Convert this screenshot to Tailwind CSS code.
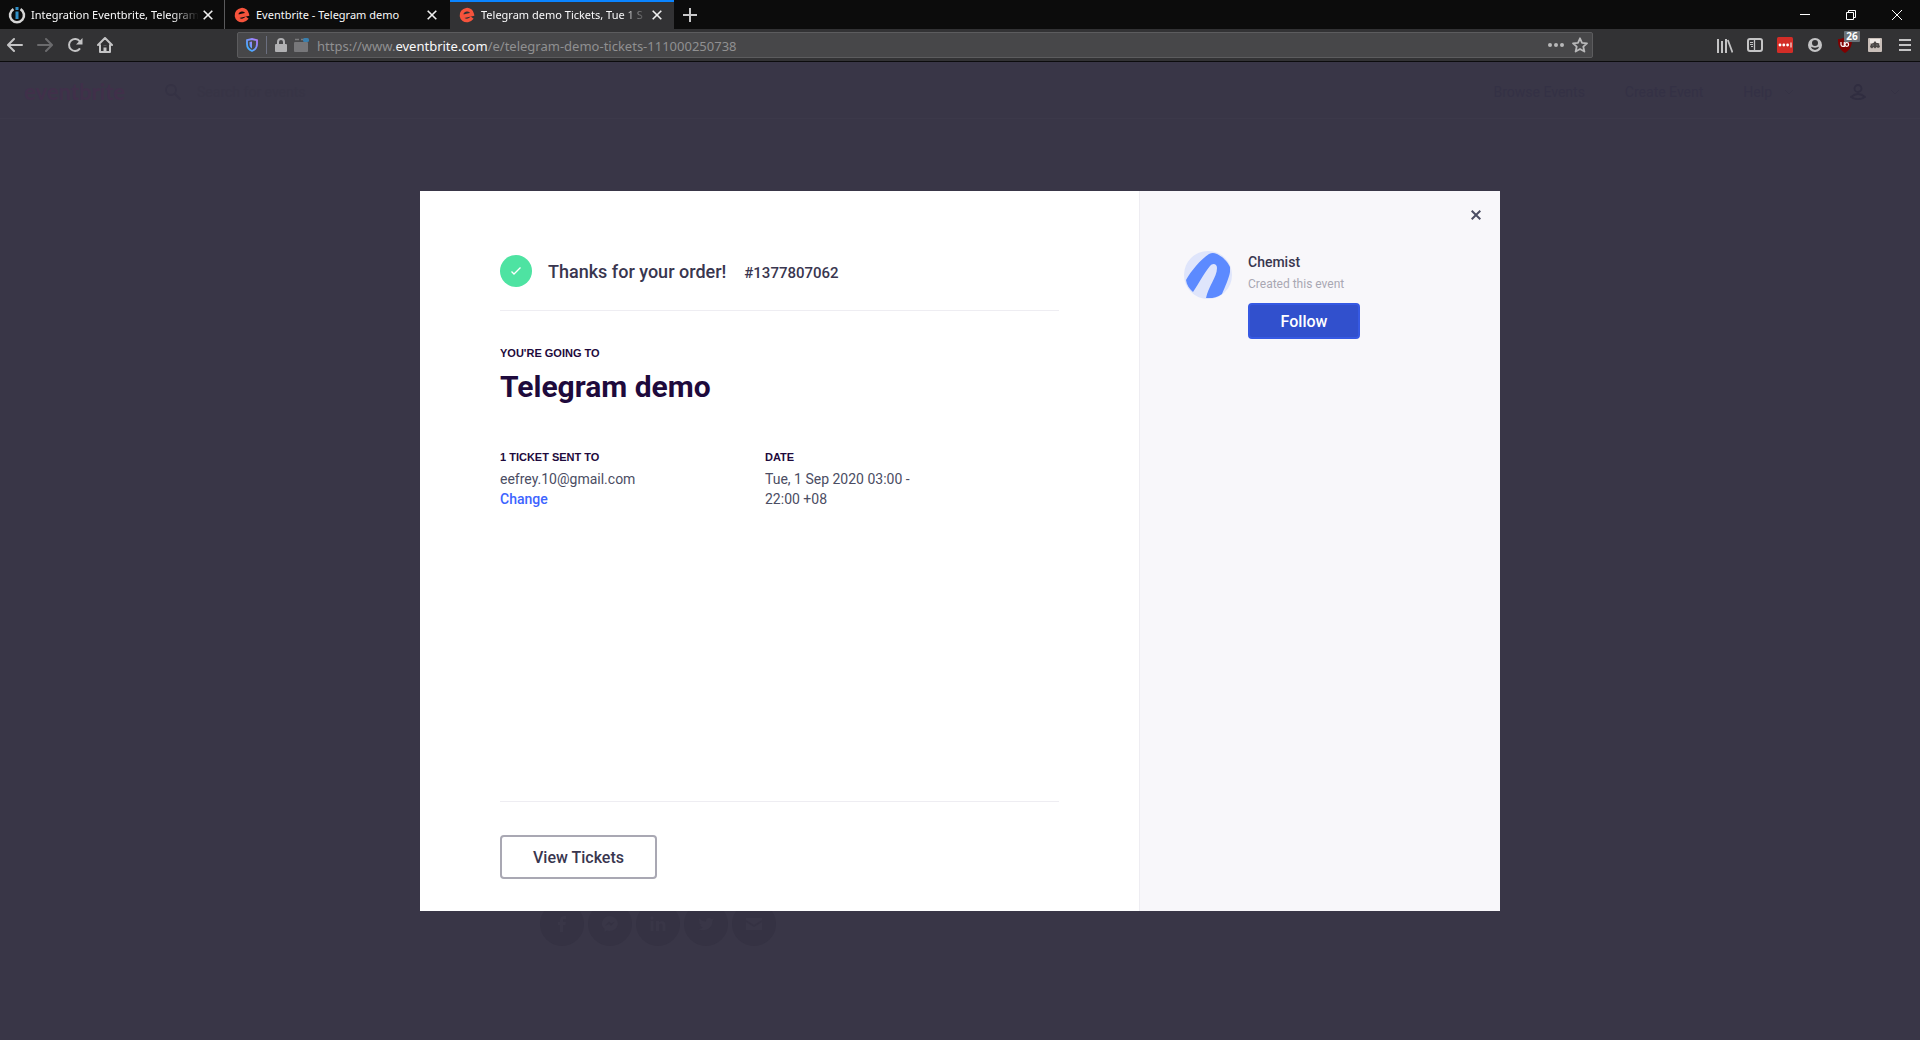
<!DOCTYPE html>
<html lang="en">
<head>
<meta charset="utf-8">
<title>Telegram demo Tickets</title>
<script src="https://cdn.jsdelivr.net/npm/@tailwindcss/browser@4"></script>
</head>
<body class="flex min-h-screen flex-col bg-[#393647] font-['Roboto',sans-serif]">

<!-- Browser chrome -->
<div class="border-b border-[#0c0c0d] bg-[#323234] font-['Noto_Sans','Open_Sans',sans-serif]">
  <div class="flex h-[29px] bg-[#0c0c0c] text-[11px] text-[#f9f9fa]">
    <div class="flex w-[225px] items-center border-r border-[#5a5a5c] pr-[7px] pl-2">
      <svg class="h-[18px] w-[18px] shrink-0" viewBox="0 0 18 18" fill="none"><path d="M5.5 3.2A7 7 0 1 0 12.500 3.200" stroke="#d6d6d6" stroke-width="2.600"/><path d="M9 5.500V13" stroke="#2f8fc7" stroke-width="3"/><path d="M9 1V4" stroke="#2f8fc7" stroke-width="3"/></svg>
      <span class="ml-[5px] flex-1 overflow-hidden pt-[2px] whitespace-nowrap [mask-image:linear-gradient(to_right,black_84%,transparent)]">Integration Eventbrite, Telegram</span>
      <button class="p-1" aria-label="Close tab"><svg class="h-[10px] w-[10px]" viewBox="0 0 10 10" stroke="#f0f0f0" stroke-width="1.600"><path d="M.7 .7L9.300 9.300M9.300 .7L.7 9.300"/></svg></button>
    </div>
    <div class="flex w-[225px] items-center pr-[9px] pl-[9px]">
      <svg class="h-4 w-4 shrink-0" viewBox="0 0 16 16" fill="none"><path d="M2.600 9.700L13.300 7.300C12.800 4.400 10.300 2.300 7.400 2.700C4.200 3.100 2 5.700 2.500 9C2.900 12 5.600 13.900 8.700 13.400C10.800 13 12.200 12 13.200 10.700" stroke="#f6533c" stroke-width="3.600"/></svg>
      <span class="ml-[6px] flex-1 overflow-hidden pt-[2px] whitespace-nowrap">Eventbrite - Telegram demo</span>
      <button class="p-1" aria-label="Close tab"><svg class="h-[10px] w-[10px]" viewBox="0 0 10 10" stroke="#f0f0f0" stroke-width="1.600"><path d="M.7 .7L9.300 9.300M9.300 .7L.7 9.300"/></svg></button>
    </div>
    <div class="flex w-[224px] items-center bg-[#323234] pr-[8px] pl-[9px] shadow-[inset_0_2px_0_#0a84ff]">
      <svg class="h-4 w-4 shrink-0" viewBox="0 0 16 16" fill="none"><path d="M2.600 9.700L13.300 7.300C12.800 4.400 10.300 2.300 7.400 2.700C4.200 3.100 2 5.700 2.500 9C2.900 12 5.600 13.900 8.700 13.400C10.800 13 12.200 12 13.200 10.700" stroke="#f6533c" stroke-width="3.600"/></svg>
      <span class="ml-[6px] flex-1 overflow-hidden pt-[2px] whitespace-nowrap [mask-image:linear-gradient(to_right,black_84%,transparent)]">Telegram demo Tickets, Tue 1 S</span>
      <button class="p-1" aria-label="Close tab"><svg class="h-[10px] w-[10px]" viewBox="0 0 10 10" stroke="#f0f0f0" stroke-width="1.600"><path d="M.7 .7L9.300 9.300M9.300 .7L.7 9.300"/></svg></button>
    </div>
    <button class="px-[9px]" aria-label="New tab"><svg class="h-[14px] w-[14px]" viewBox="0 0 14 14" stroke="#c8c8c9" stroke-width="2"><path d="M7 0V14M0 7H14"/></svg></button>
    <div class="ml-auto flex">
      <button class="grid w-[46px] place-items-center" aria-label="Minimize"><svg class="h-[10px] w-[10px]" viewBox="0 0 10 10" stroke="#fff"><path d="M0 4.500H10"/></svg></button>
      <button class="grid w-[46px] place-items-center" aria-label="Restore"><svg class="h-[10px] w-[10px]" viewBox="0 0 10 10" stroke="#fff" fill="none"><path d="M.5 2.500H7.500V9.500H.5ZM2.500 2.500V.5H9.500V7.500H7.500"/></svg></button>
      <button class="grid w-[46px] place-items-center" aria-label="Close window"><svg class="h-[10px] w-[10px]" viewBox="0 0 10 10" stroke="#fff"><path d="M0 0L10 10M10 0L0 10"/></svg></button>
    </div>
  </div>

  <div class="flex h-8 items-center">
    <button class="grid w-[30px] place-items-center" aria-label="Back"><svg class="h-4 w-4" viewBox="0 0 16 16" fill="none" stroke="#c4c4c5" stroke-width="2" stroke-linecap="round" stroke-linejoin="round"><path d="M15 8H1.500M7 2L1 8L7 14"/></svg></button>
    <button class="grid w-[30px] place-items-center" aria-label="Forward"><svg class="h-4 w-4" viewBox="0 0 16 16" fill="none" stroke="#6b6b6d" stroke-width="2" stroke-linecap="round" stroke-linejoin="round"><path d="M1 8H14.500M9 2L15 8L9 14"/></svg></button>
    <button class="grid w-[30px] place-items-center" aria-label="Reload"><svg class="h-4 w-4" viewBox="0 0 16 16" fill="none"><path d="M12.500 12A6 6 0 1 1 12.800 4.300" stroke="#c4c4c5" stroke-width="2" stroke-linecap="round"/><path d="M15.500 1V7.500H9Z" fill="#c4c4c5"/></svg></button>
    <button class="grid w-[30px] place-items-center" aria-label="Home"><svg class="h-4 w-4" viewBox="0 0 16 16" fill="none" stroke="#c4c4c5" stroke-width="2" stroke-linecap="round" stroke-linejoin="round"><path d="M1 8L8 1L15 8M3 8V15H13V8"/><path d="M8 14V10.500M8 8V8.200" stroke-width="3" stroke-linecap="butt"/></svg></button>
    <div class="mx-[117px] flex h-[26px] flex-1 items-center rounded-[2px] border border-[#5c5c5e] bg-[#474749] pr-1 pl-2">
      <svg class="h-[14px] w-3 shrink-0" viewBox="0 0 12 14" fill="none"><defs><linearGradient id="sh" x1="1" y1="0" x2="0" y2="1"><stop stop-color="#b67bff"/><stop offset="1" stop-color="#2fb5ff"/></linearGradient></defs><path d="M1 2.200L6 1L11 2.200V6C11 9.500 9 11.800 6 13C3 11.800 1 9.500 1 6Z" stroke="url(#sh)" stroke-width="1.800"/><path d="M6 3.500V10.500C4.300 9.500 3.500 8 3.500 6V4Z" fill="url(#sh)"/></svg>
      <span class="mx-2 h-[18px] w-px bg-[#6b6f80]"></span>
      <svg class="h-[14px] w-3 shrink-0" viewBox="0 0 12 14" fill="none"><path d="M3 7V4A3 3 0 0 1 9 4V7" stroke="#b1b1b3" stroke-width="2"/><rect y="6" width="12" height="8" rx="1" fill="#b1b1b3"/></svg>
      <svg class="ml-[7px] h-[15px] w-4 shrink-0" viewBox="0 0 16 15"><path d="M1 1.500H5M7 1.500H10" stroke="#7a7a7c" stroke-width="1.500"/><rect y="4" width="14" height="10" rx="1" fill="#77777a"/><rect x="9" width="6" height="4" rx="1.500" fill="#3a7fae"/></svg>
      <p class="ml-[7px] flex-1 pt-[2px] text-[13px] leading-5 text-[#909091]">https://www.<span class="text-[#f9f9fa]">eventbrite.com</span>/e/telegram-demo-tickets-111000250738</p>
      <svg class="h-4 w-4" viewBox="0 0 16 16" fill="#b8b8b9"><circle cx="2" cy="8" r="2"/><circle cx="8" cy="8" r="2"/><circle cx="14" cy="8" r="2"/></svg>
      <svg class="ml-2 h-4 w-4" viewBox="0 0 16 16" fill="none" stroke="#b8b8b9" stroke-width="1.800" stroke-linejoin="round"><path d="M8 1.300L10 5.800L15 6.300L11.300 9.700L12.400 14.600L8 12L3.600 14.600L4.700 9.700L1 6.300L6 5.800Z"/></svg>
    </div>
    <button class="grid w-[30px] place-items-center" aria-label="Library"><svg class="h-[15px] w-4" viewBox="0 0 16 15" stroke="#c4c4c5" stroke-width="2"><path d="M1 1V15M5 3V15M9 1V15" /><path d="M10.800 2L15.500 14.500" stroke-width="1.800"/></svg></button>
    <button class="grid w-[30px] place-items-center" aria-label="Sidebars"><svg class="h-[14px] w-4" viewBox="0 0 16 14" fill="none" stroke="#c4c4c5"><rect x="1" y="1" width="14" height="12" rx="2" stroke-width="2"/><path d="M7.500 1V13" stroke-width="1.300"/><path d="M3 4.500H6M3 6.500H6M4 8.500H6"/></svg></button>
    <button class="grid w-[30px] place-items-center" aria-label="Password manager"><svg class="h-4 w-4" viewBox="0 0 16 16"><rect width="16" height="16" rx="1.500" fill="#d32d27"/><g fill="#fff"><circle cx="3" cy="8" r="1.400"/><circle cx="6.800" cy="8" r="1.400"/><circle cx="10.600" cy="8" r="1.400"/><rect x="13.500" y="5.500" width="1" height="5"/></g></svg></button>
    <button class="grid w-[30px] place-items-center" aria-label="Account"><svg class="h-[14px] w-[14px]" viewBox="0 0 14 14"><circle cx="7" cy="7" r="7" fill="#c4c4c5"/><path d="M7 2A2.700 2.700 0 0 1 7 8A3 3 0 0 1 7 2M3 8.600C4 10 10 10 11 8.600C10.500 13 3.500 13 3 8.600" fill="#323234"/></svg></button>
    <button class="relative grid w-[30px] place-items-center" aria-label="Ad blocker">
      <svg class="h-4 w-[14px]" viewBox="0 0 14 16" fill="none"><path d="M7 0C9 1.500 11.500 2 14 2C14 9 12.500 12.500 7 16C1.500 12.500 0 9 0 2C2.500 2 5 1.500 7 0Z" fill="#800000"/><path d="M3 5V7.500Q3 9.300 4.700 9.300H6.300V5" stroke="#fff" stroke-width="1.200"/><circle cx="8.800" cy="7.500" r="1.800" stroke="#fff" stroke-width="1.200"/></svg>
      <span class="absolute -top-[6px] left-[14px] w-4 rounded-[1px] bg-[#6b7278] text-center text-[10px] leading-[11px] font-bold text-white">26</span>
    </button>
    <button class="grid w-[30px] place-items-center" aria-label="Extension"><svg class="h-[14px] w-[14px]" viewBox="0 0 14 14"><rect width="14" height="14" rx="1" fill="#c9bfb9"/><rect x="2" y="1" width="10" height="4" fill="#eee8e4"/><path d="M2 9L3 6L5.500 5L7 3L8.500 5L10.500 5L12 9L10 10L8.500 9L7 10.500L5.500 9L4 10.500Z" fill="#4a4644"/><path d="M4.500 7H5.500M8.500 7H9.500" stroke="#999"/></svg></button>
    <button class="grid w-[30px] place-items-center" aria-label="Menu"><svg class="h-3 w-3" viewBox="0 0 12 12" stroke="#c4c4c5" stroke-width="2"><path d="M0 1H12M0 6H12M0 11H12"/></svg></button>
  </div>
</div>

<!-- Event page, dimmed under the order dialog -->
<main class="relative flex-1">
  <header class="flex h-[57px] items-center border-b border-[#3c394a] pt-1 pr-5 pl-6 text-sm text-[#343145]">
    <a href="#" class="text-[22px] leading-6 font-bold text-[#40304a] font-['Lato',sans-serif]">eventbrite</a>
    <svg class="ml-10 h-4 w-4" viewBox="0 0 16 16" fill="none" stroke="#353244" stroke-width="1.800"><circle cx="6" cy="6" r="5"/><path d="M10 10L15.500 15.500"/></svg>
    <span class="ml-4 text-[#373445]">Search for events</span>
    <nav class="ml-auto flex items-center">
      <a href="#">Browse Events</a>
      <a href="#" class="ml-10">Create Event</a>
      <a href="#" class="ml-10">Help</a>
      <svg class="ml-3 h-[6px] w-[10px]" viewBox="0 0 10 6" fill="none" stroke="#353244"><path d="M1 1L5 5L9 1"/></svg>
      <svg class="ml-14 h-4 w-4" viewBox="0 0 16 16" fill="none" stroke="#302d40" stroke-width="1.800"><circle cx="8" cy="4.500" r="3.500"/><path d="M1 13Q8 7 15 13Q8 17.500 1 13Z"/></svg>
      <svg class="ml-6 h-[6px] w-[10px]" viewBox="0 0 10 6" fill="none" stroke="#353244"><path d="M1 1L5 5L9 1"/></svg>
    </nav>
  </header>
  <div class="mx-auto flex w-full max-w-[1080px] gap-1 px-[120px] pt-[783px]">
    <a href="#" aria-label="Facebook" class="grid size-11 place-items-center rounded-full bg-[#353243]"><svg class="size-4" viewBox="0 0 16 16" fill="#393647"><path d="M6 16V9H4V6H6V4C6 1.500 7.500 0 10 0H12V3H10.500C9.500 3 9 3.300 9 4.300V6H12L11.500 9H9V16Z"/></svg></a>
    <a href="#" aria-label="Messenger" class="grid size-11 place-items-center rounded-full bg-[#353243]"><svg class="size-4" viewBox="0 0 16 16" fill="#393647"><path d="M8 0A8 7.500 0 1 1 5 14.500L2.500 16V13A8 7.500 0 0 1 8 0Z"/><path d="M3 10L7 5.500L9 7.500L13 5.500L9 10L7 8Z" fill="#353243"/></svg></a>
    <a href="#" aria-label="LinkedIn" class="grid size-11 place-items-center rounded-full bg-[#353243]"><svg class="size-4" viewBox="0 0 16 16" fill="#393647"><circle cx="2" cy="2" r="1.800"/><path d="M.5 5H3.500V15H.5ZM6 5H9V6.500C11 4 15.500 4.500 15.500 9V15H12.500V9.500C12.500 6.800 9 6.800 9 9.500V15H6Z"/></svg></a>
    <a href="#" aria-label="Twitter" class="grid size-11 place-items-center rounded-full bg-[#353243]"><svg class="size-4" viewBox="0 0 16 16" fill="#393647"><path d="M1 2Q4 5.500 8 5.500C7.500 2 11.500 .5 13.500 3L16 2.500L14.500 5C14.500 12 7.500 16.500 0 13Q3 13 5 11.500Q2.500 11 2 9H3.500Q1 8 1 5.500L2 6Q0 4 1 2Z"/></svg></a>
    <a href="#" aria-label="Email" class="grid size-11 place-items-center rounded-full bg-[#353243]"><svg class="size-4" viewBox="0 0 16 16" fill="#393647"><path d="M0 2H16V4L8 9L0 4ZM0 6L8 11L16 6V14H0Z"/></svg></a>
  </div>

  <!-- Order confirmation dialog -->
  <div class="absolute inset-0 flex items-center justify-center">
    <section role="dialog" aria-label="Order confirmation" class="flex min-h-[720px] w-full max-w-[1080px] bg-white text-[#39364f]">
      <div class="flex flex-1 flex-col px-20 pt-16 pb-8">
        <div class="flex items-center border-b border-[#eeedf2] pb-[23px]">
          <svg class="size-8" viewBox="0 0 32 32" fill="none"><circle cx="16" cy="16" r="16" fill="#4ee3a2"/><path d="M11.500 16.500L14 19L20.500 12.500" stroke="#fff" stroke-width="1.300"/></svg>
          <p class="ml-4 pt-[2px] text-lg font-medium">Thanks for your order!</p>
          <p class="ml-[18px] pt-1 text-[15px] font-medium">#1377807062</p>
        </div>
        <p class="mt-8 text-[11px] leading-5 font-bold text-[#1e0a3c] font-['Liberation_Sans',sans-serif]">YOU'RE GOING TO</p>
        <h1 class="mt-1 text-[30px] leading-10 font-bold text-[#1e0a3c]">Telegram demo</h1>
        <div class="mt-10 grid grid-cols-[265px_160px] text-sm leading-5 text-[#4b4d63]">
          <div>
            <h2 class="mb-[2px] text-[11px] leading-5 font-bold text-[#1e0a3c] font-['Liberation_Sans',sans-serif]">1 TICKET SENT TO</h2>
            <p>eefrey.10@gmail.com</p>
            <a href="#" class="font-medium text-[#3d64ff]">Change</a>
          </div>
          <div>
            <h2 class="mb-[2px] text-[11px] leading-5 font-bold text-[#1e0a3c] font-['Liberation_Sans',sans-serif]">DATE</h2>
            <p>Tue, 1 Sep 2020 03:00 - 22:00 +08</p>
          </div>
        </div>
        <div class="mt-auto border-t border-[#eeedf2] pt-[33px]">
          <button class="h-11 w-[157px] rounded border-2 border-[#a9a8b3] pt-[2px] text-base font-medium">View Tickets</button>
        </div>
      </div>
      <aside class="w-[361px] border-l border-[#eeedf2] bg-[#f8f7fa]">
        <div class="flex justify-end pt-[17px] pr-[17px]">
          <button class="grid size-[14px] place-items-center" aria-label="Close"><svg class="size-[10px]" viewBox="0 0 10 10" stroke="#4b4d63" stroke-width="2"><path d="M.7 .7L9.300 9.300M9.300 .7L.7 9.300"/></svg></button>
        </div>
        <div class="flex gap-4 pt-[29px] pl-11">
          <svg class="size-12" viewBox="0 0 48 48"><circle cx="24" cy="24" r="24" fill="#dfe5fb"/><path d="M2 29C7 20 17 8 25 3C28 1.500 30 1.800 33 3C39 6 43 10 46 16V21C45 27 41 36 38 43C33 46.500 28 47.500 22 47C24 36 33 26 33 17C33 12 28 12 26 15C19 24 15 32 9 41C5.500 38 2.500 34 2 29Z" fill="#5c8aff"/></svg>
          <div>
            <h3 class="text-sm leading-[22px] font-medium">Chemist</h3>
            <p class="text-xs leading-[22px] text-[#a9a8b3]">Created this event</p>
            <button class="mt-2 h-9 w-28 rounded border-2 border-[#3659e3] bg-[#3150cd] pt-px text-base leading-5 font-medium text-white">Follow</button>
          </div>
        </div>
      </aside>
    </section>
  </div>
</main>
</body>
</html>
